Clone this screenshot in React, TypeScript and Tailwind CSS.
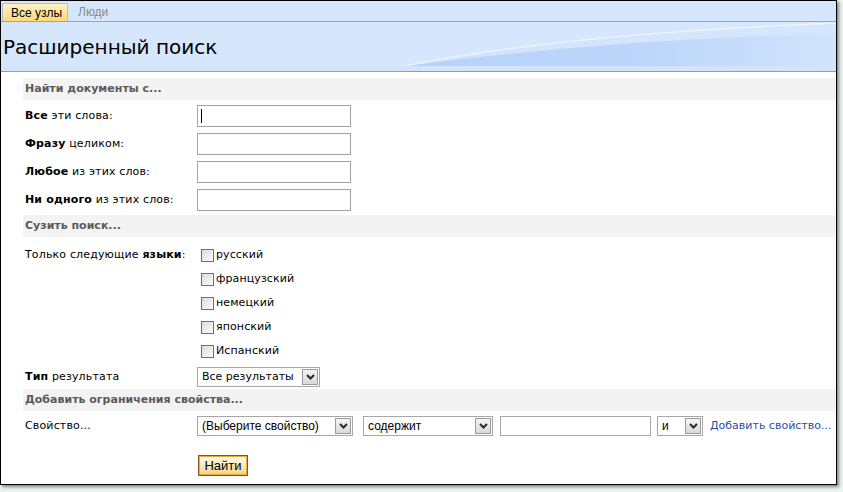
import React from "react";

const V = "font-['DejaVu_Sans',Verdana,sans-serif]";
const A = "font-['Liberation_Sans',Arial,sans-serif]";

function Chevron() {
  return (
    <svg width="9" height="6" viewBox="0 0 9 6">
      <path d="M1 1 L4.5 4.5 L8 1" fill="none" stroke="#2a2a2a" strokeWidth="2" />
    </svg>
  );
}

function Select({ w, text, font }: { w: string; text: string; font: string }) {
  return (
    <div className={`${w} h-[20px] border border-[#a7a7a7] bg-white flex items-center justify-between pl-[4px] pr-[1px]`}>
      <span className={`${font} text-black whitespace-nowrap`}>{text}</span>
      <div className="w-[16px] h-[16px] border border-[#9b9b9b] bg-gradient-to-b from-[#f4f4f4] to-[#d9d9d9] flex items-center justify-center">
        <Chevron />
      </div>
    </div>
  );
}

function Checkbox({ label }: { label: string }) {
  return (
    <div className="h-[24px] flex items-center">
      <div className="ml-[4px] w-[13px] h-[13px] border border-[#707070] bg-gradient-to-br from-[#dcdcdc] to-[#fbfbfb]" />
      <span className={`${V} text-[11px] tracking-[0.1px] text-black ml-[2px]`}>{label}</span>
    </div>
  );
}

function Header({ text }: { text: string }) {
  return (
    <div className={`h-[22px] bg-[#f3f3f3] pl-[2px] flex items-center ${V} text-[11px] font-bold text-[#5a5a5a]`}>
      {text}
    </div>
  );
}

function InputRow({ bold, rest, caret }: { bold: string; rest: string; caret?: boolean }) {
  return (
    <div className="flex items-center h-[22px] pl-[2px]">
      <div className={`w-[172px] ${V} text-[11px] tracking-[0.15px] text-black`}>
        <b>{bold}</b> {rest}
      </div>
      <div className="w-[154px] h-[22px] border border-[#a3a3a3] bg-white relative">
        {caret && <div className="absolute left-[3px] top-[3px] w-[1px] h-[14px] bg-black" />}
      </div>
    </div>
  );
}

export default function App() {
  return (
    <div className="w-[843px] h-[492px] bg-[#e8f4f0] overflow-hidden">
      <div className="w-[837px] h-[485px] border border-black bg-white shadow-[2px_2px_3px_rgba(0,0,0,0.45)] flex flex-col overflow-hidden">
        {/* tab bar */}
        <div className="h-[21px] bg-[#d6e6fc] border-b border-[#86a5d8] flex items-end pl-[1px]">
          <div className={`h-[18px] w-[66px] border border-b-0 border-[#a3bfe6] bg-gradient-to-b from-[#fff3c4] to-[#ffd777] flex items-center pl-[8px] ${A} text-[12px] text-black`}>
            Все узлы
          </div>
          <div className={`h-[18px] flex items-center ml-[10px] ${A} text-[12px] text-[#8a8a8a]`}>Люди</div>
        </div>
        {/* title band */}
        <div className="relative h-[50px] bg-[#d6e6fc] border-b border-[#7f9fd4] shrink-0">
          <svg className="absolute left-0 top-0" width="835" height="49" viewBox="0 0 835 49">
            <defs>
              <linearGradient id="dk" x1="0" y1="0" x2="1" y2="0">
                <stop offset="0" stopColor="#b6d2fa" />
                <stop offset="0.55" stopColor="#bcd6fa" />
                <stop offset="1" stopColor="#d2e3fc" />
              </linearGradient>
              <linearGradient id="lt" x1="0" y1="0" x2="1" y2="0">
                <stop offset="0" stopColor="#d2e3fc" />
                <stop offset="1" stopColor="#d6e6fc" />
              </linearGradient>
            </defs>
            <path d="M404 44 Q 560 12 835 1 L835 44 Z" fill="url(#lt)" />
            <path d="M404 44 Q 620 16 835 12 L835 44 Z" fill="url(#dk)" />
            <path d="M404 44 Q 560 12 835 1" fill="none" stroke="#eef5ff" strokeWidth="1.3" />
            <rect x="0" y="44" width="835" height="5" fill="#d3e3fb" />
          </svg>
          <div className={`relative pl-[2px] pt-[12px] ${V} text-[20px] leading-[26px] text-black`}>Расширенный поиск</div>
        </div>
        {/* content */}
        <div className="pt-[6px] pl-[22px]">
          <Header text="Найти документы с..." />
          <div className="mt-[5px] flex flex-col gap-[6px]">
            <InputRow bold="Все" rest="эти слова:" caret />
            <InputRow bold="Фразу" rest="целиком:" />
            <InputRow bold="Любое" rest="из этих слов:" />
            <InputRow bold="Ни одного" rest="из этих слов:" />
          </div>
          <div className="mt-[4px]">
            <Header text="Сузить поиск..." />
          </div>
          <div className="mt-[6px] flex pl-[2px]">
            <div className={`w-[172px] h-[24px] flex items-center ${V} text-[11px] tracking-[0.15px] text-black`}>
              <span>
                Только следующие <b>языки</b>:
              </span>
            </div>
            <div className="flex flex-col">
              <Checkbox label="русский" />
              <Checkbox label="французский" />
              <Checkbox label="немецкий" />
              <Checkbox label="японский" />
              <Checkbox label="Испанский" />
            </div>
          </div>
          <div className="mt-[4px] flex items-center pl-[2px] h-[20px]">
            <div className={`w-[172px] ${V} text-[11px] tracking-[0.15px] text-black`}>
              <b>Тип</b> результата
            </div>
            <Select w="w-[123px]" text="Все результаты" font={`${V} text-[11px]`} />
          </div>
          <div className="mt-[2px]">
            <Header text="Добавить ограничения свойства..." />
          </div>
          <div className="mt-[5px] flex items-center pl-[2px] h-[20px]">
            <div className={`w-[172px] ${V} text-[11px] tracking-[0.15px] text-black`}>Свойство...</div>
            <Select w="w-[156px]" text="(Выберите свойство)" font={`${A} text-[12px]`} />
            <div className="ml-[10px]">
              <Select w="w-[130px]" text="содержит" font={`${A} text-[12px]`} />
            </div>
            <div className="ml-[7px] w-[151px] h-[20px] border border-[#a7a7a7] bg-white" />
            <div className="ml-[6px]">
              <Select w="w-[46px]" text="и" font={`${A} text-[12px]`} />
            </div>
            <span className={`ml-[7px] ${V} text-[11px] text-[#1f4fa6] whitespace-nowrap`}>Добавить свойство...</span>
          </div>
          <div className="mt-[19px] pl-[175px]">
            <div className={`w-[50px] h-[21px] border border-[#7a5a22] shadow-[inset_0_0_0_1px_#eea83a] bg-gradient-to-b from-[#fffdf2] to-[#f6d27e] flex items-center justify-center ${A} text-[13px] text-black`}>
              Найти
            </div>
          </div>
        </div>
      </div>
    </div>
  );
}
